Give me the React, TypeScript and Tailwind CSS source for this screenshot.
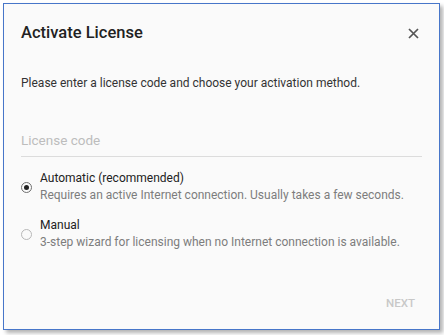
import React from "react";

const options = [
  {
    title: "Automatic (recommended)",
    desc: "Requires an active Internet connection. Usually takes a few seconds.",
    checked: true,
  },
  {
    title: "Manual",
    desc: "3-step wizard for licensing when no Internet connection is available.",
    checked: false,
  },
];

const Radio = ({ checked }: { checked: boolean }) => (
  <div
    className={`w-[11px] h-[11px] shrink-0 rounded-full border flex items-center justify-center ${
      checked ? "border-[#6f6f6f]" : "border-[#b8b8b8]"
    }`}
  >
    {checked && <div className="w-[5px] h-[5px] rounded-full bg-[#222]" />}
  </div>
);

const App = () => (
  <div
    className="w-[444px] h-[335px] bg-white pt-[3px] pl-[3px]"
    style={{ fontFamily: "Roboto, 'Liberation Sans', sans-serif" }}
  >
    <div className="w-[437px] h-[327px] bg-[#fafafa] border border-[#4776c9] shadow-[3px_3px_4px_rgba(0,0,0,0.3)] flex flex-col px-[17px]">
      <div className="flex items-center justify-between pt-[18px]">
        <h1 className="text-[16.5px] font-medium text-[#222] leading-[22px]">
          Activate License
        </h1>
        <svg
          width="11"
          height="11"
          viewBox="0 0 11 11"
          className="mr-[3px]"
          stroke="#555"
          strokeWidth="1.7"
        >
          <path d="M1 1L10 10M10 1L1 10" />
        </svg>
      </div>

      <p className="mt-[31px] text-[12px] text-[#333] leading-[16px]">
        Please enter a license code and choose your activation method.
      </p>

      <div className="mt-[39px] border-b border-[#dcdcdc] pb-[6px]">
        <span className="block text-[13.5px] text-[#bdbdbd] leading-[20px]">License code</span>
      </div>

      <div className="mt-[13px] flex flex-col gap-[13px]">
        {options.map((o) => (
          <div key={o.title} className="flex items-center gap-[8px]">
            <Radio checked={o.checked} />
            <div className="flex flex-col text-[12px] leading-[17px]">
              <span className="text-[#222]">{o.title}</span>
              <span className="text-[#7d7d7d]">{o.desc}</span>
            </div>
          </div>
        ))}
      </div>

      <div className="mt-auto mb-[17px] flex justify-end pr-[7px]">
        <span className="text-[11.5px] font-medium text-[#c8c8c8]">NEXT</span>
      </div>
    </div>
  </div>
);

export default App;
